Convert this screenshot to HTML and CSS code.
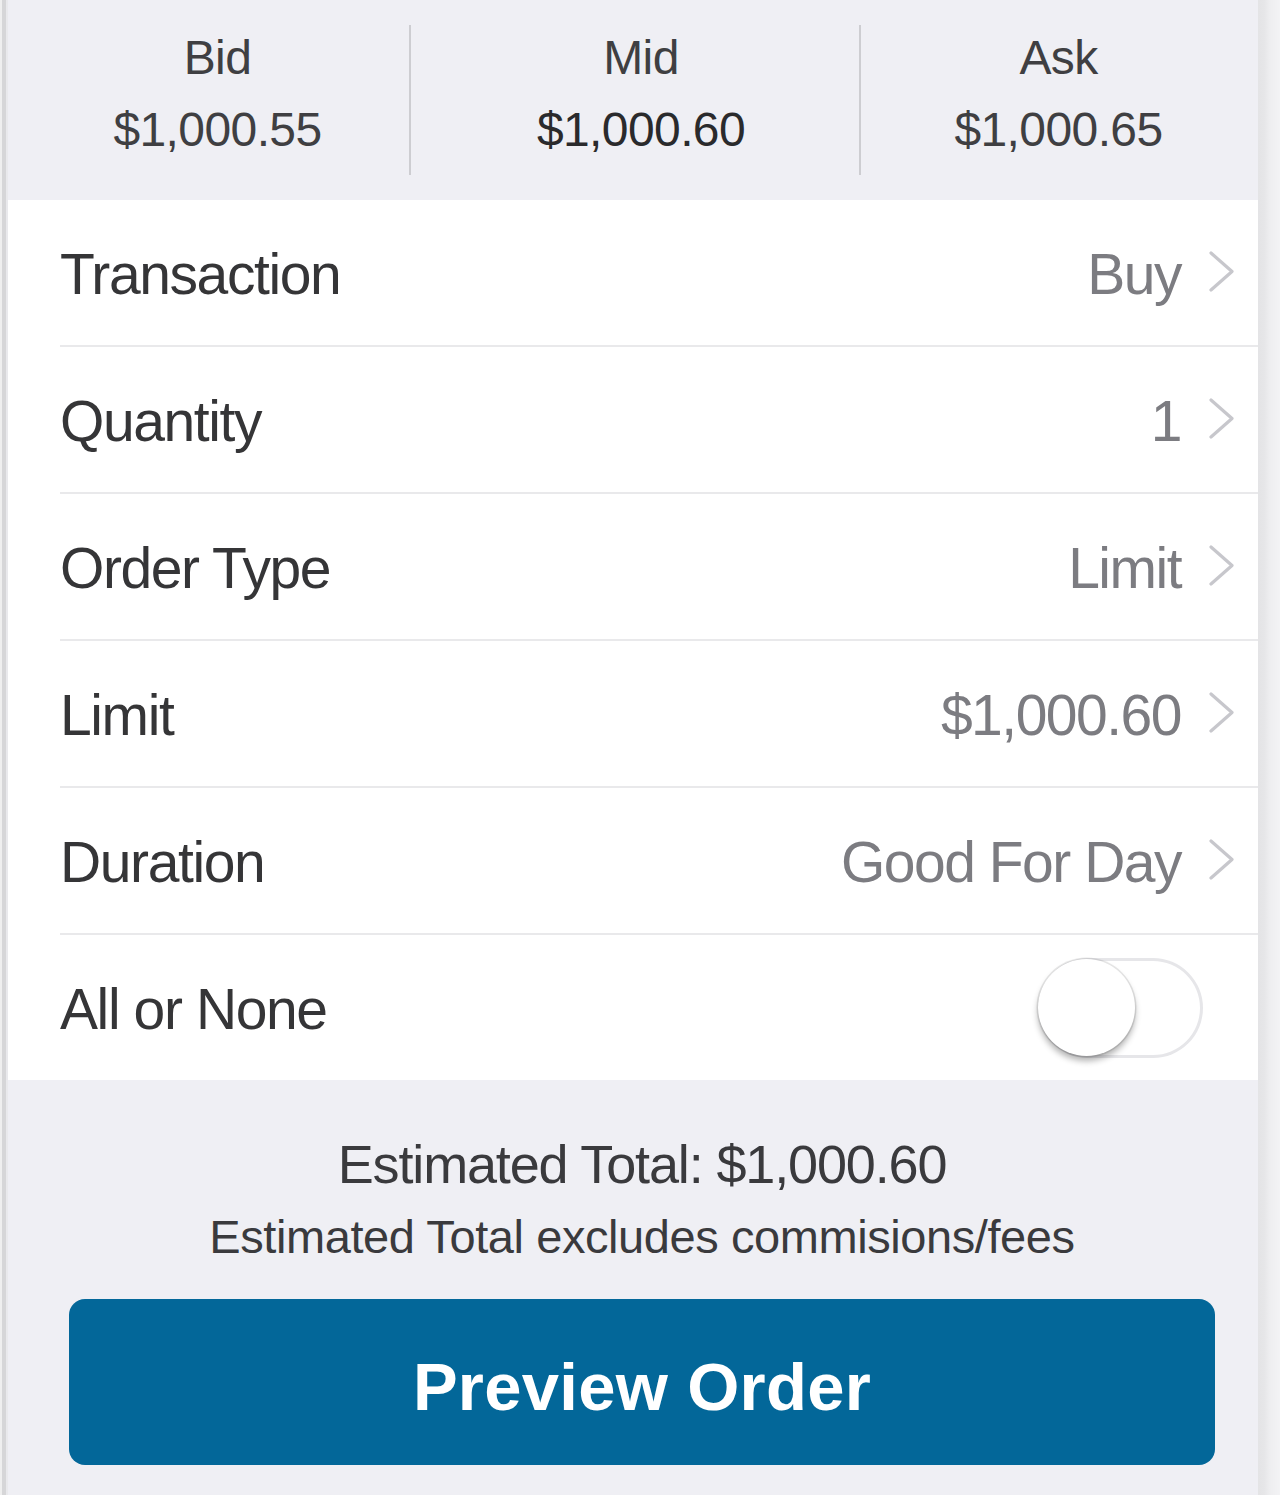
FILE: index.html
```html
<!DOCTYPE html>
<html lang="en">
<head>
<meta charset="utf-8">
<title>Order Entry</title>
<link rel="stylesheet" href="styles.css">
</head>
<body>
<div class="frame">
  <div class="edge-left"></div>
  <main class="panel">
    <section class="quote">
      <div class="quote-col col-bid">
        <div class="quote-label">Bid</div>
        <div class="quote-value">$1,000.55</div>
      </div>
      <div class="quote-divider"></div>
      <div class="quote-col col-mid">
        <div class="quote-label">Mid</div>
        <div class="quote-value quote-value-mid">$1,000.60</div>
      </div>
      <div class="quote-divider"></div>
      <div class="quote-col col-ask">
        <div class="quote-label">Ask</div>
        <div class="quote-value">$1,000.65</div>
      </div>
    </section>

    <section class="list">
      <div class="row">
        <div class="row-inner">
          <span class="row-label">Transaction</span>
          <span class="row-value">Buy</span>
          <svg class="chevron" viewBox="0 0 27 41" width="27" height="41"><path d="M3 2 L24 20.5 L3 39" fill="none" stroke="#c7c7cc" stroke-width="3.2" stroke-linecap="round" stroke-linejoin="round"/></svg>
        </div>
      </div>
      <div class="row">
        <div class="row-inner">
          <span class="row-label">Quantity</span>
          <span class="row-value">1</span>
          <svg class="chevron" viewBox="0 0 27 41" width="27" height="41"><path d="M3 2 L24 20.5 L3 39" fill="none" stroke="#c7c7cc" stroke-width="3.2" stroke-linecap="round" stroke-linejoin="round"/></svg>
        </div>
      </div>
      <div class="row">
        <div class="row-inner">
          <span class="row-label">Order Type</span>
          <span class="row-value">Limit</span>
          <svg class="chevron" viewBox="0 0 27 41" width="27" height="41"><path d="M3 2 L24 20.5 L3 39" fill="none" stroke="#c7c7cc" stroke-width="3.2" stroke-linecap="round" stroke-linejoin="round"/></svg>
        </div>
      </div>
      <div class="row">
        <div class="row-inner">
          <span class="row-label">Limit</span>
          <span class="row-value">$1,000.60</span>
          <svg class="chevron" viewBox="0 0 27 41" width="27" height="41"><path d="M3 2 L24 20.5 L3 39" fill="none" stroke="#c7c7cc" stroke-width="3.2" stroke-linecap="round" stroke-linejoin="round"/></svg>
        </div>
      </div>
      <div class="row">
        <div class="row-inner">
          <span class="row-label">Duration</span>
          <span class="row-value">Good For Day</span>
          <svg class="chevron" viewBox="0 0 27 41" width="27" height="41"><path d="M3 2 L24 20.5 L3 39" fill="none" stroke="#c7c7cc" stroke-width="3.2" stroke-linecap="round" stroke-linejoin="round"/></svg>
        </div>
      </div>
      <div class="row row-last">
        <div class="row-inner">
          <span class="row-label">All or None</span>
          <span class="toggle"><span class="toggle-thumb"></span></span>
        </div>
      </div>
    </section>

    <section class="summary">
      <div class="summary-total">Estimated Total: $1,000.60</div>
      <div class="summary-note">Estimated Total excludes commisions/fees</div>
      <button class="preview-btn" type="button">Preview Order</button>
    </section>
  </main>
  <div class="edge-right"></div>
</div>
</body>
</html>
```

FILE: styles.css
```css
* {
  box-sizing: border-box;
}

html, body {
  margin: 0;
  padding: 0;
}

body {
  width: 1280px;
  height: 1495px;
  overflow: hidden;
  background: #efeff4;
  font-family: "Liberation Sans", Arial, sans-serif;
  -webkit-font-smoothing: antialiased;
}

.frame {
  display: flex;
  width: 1280px;
  height: 1495px;
}

.edge-left {
  flex: 0 0 8px;
  background: linear-gradient(to right, #efefef 0, #efefef 2px, #d6d6d8 2px, #d6d6d8 6px, #e9e9ec 6px, #e9e9ec 8px);
}

.edge-right {
  flex: 0 0 22px;
  background: linear-gradient(to right, #e4e4e6 0, #e6e6e8 6px, #eeeef0 12px, #f3f3f5 22px);
}

.panel {
  flex: 0 0 1250px;
  display: flex;
  flex-direction: column;
  background: #efeff4;
}

/* Quote header */
.quote {
  height: 200px;
  display: flex;
  align-items: flex-start;
  background: #efeff4;
}

.quote-col {
  display: flex;
  flex-direction: column;
  align-items: center;
  padding-top: 22px;
}

.col-bid {
  width: 401px;
  padding-left: 18px;
}

.col-mid {
  width: 448px;
  padding-left: 12px;
}

.col-ask {
  flex: 1;
  padding-right: 2px;
}

.quote-divider {
  flex: 0 0 2px;
  height: 150px;
  margin-top: 25px;
  background: #cdcdd1;
}

.quote-label,
.quote-value {
  font-size: 48px;
  line-height: 72px;
  letter-spacing: -0.6px;
  color: #3f3f42;
}

.quote-value-mid {
  color: #2a2a2c;
}

/* List rows */
.list {
  background: #ffffff;
  display: flex;
  flex-direction: column;
}

.row {
  padding-left: 52px;
}

.row-inner {
  height: 147px;
  display: flex;
  align-items: center;
  padding-top: 4px;
  padding-right: 23px;
  border-bottom: 2px solid #e9e9eb;
}

.row-last .row-inner {
  height: 145px;
  border-bottom: none;
}

.row-label {
  flex: 1;
  font-size: 57px;
  line-height: 57px;
  letter-spacing: -1.4px;
  color: #353537;
}

.row-value {
  font-size: 57px;
  line-height: 57px;
  letter-spacing: -1.5px;
  color: #7c7c81;
}

.chevron {
  flex: 0 0 27px;
  margin-left: 27px;
  margin-top: -6px;
}

.toggle {
  width: 165px;
  height: 100px;
  margin-right: 32px;
  margin-top: -4px;
  border-radius: 50px;
  background: #ffffff;
  box-shadow: inset 0 0 0 3px #e6e6e9;
  display: flex;
  align-items: center;
}

.toggle-thumb {
  width: 97px;
  height: 97px;
  border-radius: 50%;
  background: #ffffff;
  box-shadow: 0 0 0 1.5px rgba(0, 0, 0, 0.09), 0 5px 6px rgba(0, 0, 0, 0.3);
}

/* Summary */
.summary {
  flex: 1;
  display: flex;
  flex-direction: column;
  align-items: center;
  padding: 49px 43px 0 61px;
  background: #efeff4;
}

.summary-total {
  font-size: 54px;
  line-height: 70px;
  letter-spacing: -1.15px;
  color: #3a3a3d;
}

.summary-note {
  margin-top: 8px;
  font-size: 47px;
  line-height: 60px;
  letter-spacing: -0.42px;
  color: #3a3a3d;
}

.preview-btn {
  margin-top: 32px;
  width: 100%;
  height: 166px;
  border: none;
  border-radius: 16px;
  background: #036799;
  color: #ffffff;
  font-family: "Liberation Sans", Arial, sans-serif;
  font-weight: bold;
  font-size: 67px;
  line-height: 67px;
  letter-spacing: 0.3px;
  padding: 8px 0 0 0;
  display: flex;
  align-items: center;
  justify-content: center;
}
```
